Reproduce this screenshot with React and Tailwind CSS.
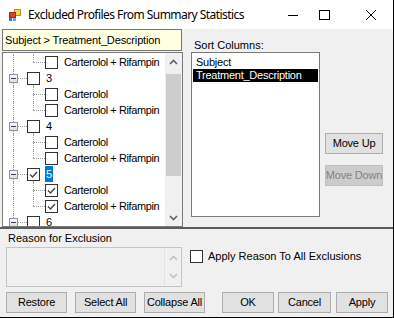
import React from "react";

const ui = { fontFamily: '"Liberation Sans", Arial, sans-serif' };
const segoe = { fontFamily: '"Noto Sans", "Open Sans", sans-serif' };

const Check = ({ checked }) => (
  <div className="relative z-10 flex h-[13px] w-[13px] shrink-0 items-center justify-center border border-[#333333] bg-white">
    {checked && (
      <svg width="11" height="11" viewBox="0 0 11 11">
        <path d="M2 5.5 L4.5 8 L9 3" fill="none" stroke="#444" strokeWidth="1.4" />
      </svg>
    )}
  </div>
);

const Expander = () => (
  <div className="relative z-10 flex h-[9px] w-[9px] shrink-0 items-center justify-center border border-[#919191] bg-gradient-to-b from-white to-[#dcdcdc]">
    <div className="h-[1px] w-[5px] bg-[#2e3f63]" />
  </div>
);

const Chevron = ({ up, color = "#606060" }) => (
  <svg width="9" height="6" viewBox="0 0 9 6">
    <path
      d={up ? "M1 5 L4.5 1.5 L8 5" : "M1 1 L4.5 4.5 L8 1"}
      fill="none"
      stroke={color}
      strokeWidth="1.6"
    />
  </svg>
);

const ParentRow = ({ label, checked, selected }) => (
  <div className="relative flex h-[16px] items-center">
    <div className="absolute left-[10px] top-0 h-full border-l border-dotted border-[#a0a0a0]" />
    <div className="absolute left-[30px] top-[12px] h-[4px] border-l border-dotted border-[#a0a0a0]" />
    <div className="ml-[6px]">
      <Expander />
    </div>
    <div className="w-[9px] border-t border-dotted border-[#a0a0a0]" />
    <Check checked={checked} />
    <span
      className={
        selected
          ? "ml-[5px] bg-[#0078d7] px-[1px] leading-[16px] text-white"
          : "ml-[6px] text-black"
      }
    >
      {label}
    </span>
  </div>
);

const ChildRow = ({ label, checked, last }) => (
  <div className="relative flex h-[16px] items-center">
    <div className="absolute left-[10px] top-0 h-full border-l border-dotted border-[#a0a0a0]" />
    <div
      className={`absolute left-[30px] top-0 border-l border-dotted border-[#a0a0a0] ${last ? "h-[8px]" : "h-full"}`}
    />
    <div className="w-[30px] shrink-0" />
    <div className="w-[12px] border-t border-dotted border-[#a0a0a0]" />
    <Check checked={checked} />
    <span className="ml-[6px] whitespace-nowrap tracking-[-0.4px] text-black">{label}</span>
  </div>
);

const Btn = ({ w, children, disabled }) => (
  <div
    className={`flex h-[21px] shrink-0 items-center justify-center whitespace-nowrap border tracking-[-0.2px] ${
      disabled
        ? "border-[#bfbfbf] bg-[#cccccc] text-[#838383]"
        : "border-[#adadad] bg-[#e1e1e1] text-black"
    } ${w}`}
  >
    {children}
  </div>
);

export default function App() {
  return (
    <div
      className="relative flex h-[318px] w-[394px] flex-col overflow-hidden border-b border-r border-black bg-[#f0f0f0] text-[11px]"
      style={ui}
    >
      {/* title bar */}
      <div className="flex h-[29px] shrink-0 items-center bg-white">
        <svg className="ml-[9px]" width="12" height="12" viewBox="0 0 12 12">
          <rect x="5.5" y="0.5" width="6" height="6" fill="#f7d44a" stroke="#c58a12" />
          <rect x="0.5" y="3.5" width="6" height="5" fill="#d8412f" stroke="#a32a1e" />
          <rect x="0" y="9" width="3" height="3" fill="#3b6fd0" />
          <rect x="4" y="9" width="3" height="3" fill="#6fa0e8" />
        </svg>
        <span className="ml-[7px] flex-1 text-[12px] tracking-[-0.55px] text-black" style={segoe}>
          Excluded Profiles From Summary Statistics
        </span>
        <svg width="10" height="10" viewBox="0 0 10 10">
          <path d="M0 5.5 H10" stroke="#000" strokeWidth="1" />
        </svg>
        <svg className="ml-[21px]" width="11" height="10" viewBox="0 0 11 10">
          <rect x="0.5" y="0.5" width="10" height="9" fill="none" stroke="#000" />
        </svg>
        <svg className="ml-[36px] mr-[17px]" width="10" height="10" viewBox="0 0 10 10">
          <path d="M0 0 L10 10 M10 0 L0 10" stroke="#000" strokeWidth="1" />
        </svg>
      </div>

      {/* top section */}
      <div className="flex h-[198px] shrink-0">
        <div className="w-[183px] shrink-0 pl-[2px] pt-[23px]">
          <div className="flex h-[175px] w-[181px] border border-[#7a7a7a] bg-white">
            <div className="flex-1 overflow-hidden pt-[1px]">
              <ChildRow label="Carterolol + Rifampin" last />
              <ParentRow label="3" />
              <ChildRow label="Carterolol" />
              <ChildRow label="Carterolol + Rifampin" last />
              <ParentRow label="4" />
              <ChildRow label="Carterolol" />
              <ChildRow label="Carterolol + Rifampin" last />
              <ParentRow label="5" checked selected />
              <ChildRow label="Carterolol" checked />
              <ChildRow label="Carterolol + Rifampin" checked last />
              <ParentRow label="6" />
            </div>
            <div className="flex w-[17px] shrink-0 flex-col bg-[#f0f0f0]">
              <div className="flex h-[17px] items-center justify-center">
                <Chevron up />
              </div>
              <div className="flex-1 px-[1px] pt-[4px]">
                <div className="h-[102px] bg-[#cdcdcd]" />
              </div>
              <div className="flex h-[17px] items-center justify-center">
                <Chevron />
              </div>
            </div>
          </div>
        </div>

        <div className="flex flex-1 pl-[8px] pt-[9px]">
          <div className="flex flex-col">
            <div className="h-[14px] pl-[3px] leading-[14px] text-black">Sort Columns:</div>
            <div className="h-[165px] w-[129px] border border-[#7a7a7a] bg-white pl-[1px] pr-[1px] pt-[3px] tracking-[-0.25px]">
              <div className="h-[13px] pl-[3px] leading-[13px] text-black">Subject</div>
              <div className="h-[13px] bg-black pl-[3px] leading-[13px] text-white">
                Treatment_Description
              </div>
            </div>
          </div>
          <div className="ml-[5px] flex flex-col gap-[11px] pt-[95px]">
            <Btn w="w-[58px]">Move Up</Btn>
            <Btn w="w-[58px]" disabled>
              Move Down
            </Btn>
          </div>
        </div>
      </div>

      {/* splitter */}
      <div className="h-[2px] shrink-0 bg-[#5c5c5c]" />

      {/* bottom section */}
      <div className="flex flex-1 flex-col">
        <div className="flex">
          <div className="ml-[6px] flex w-[176px] flex-col">
            <div className="h-[18px] pl-[2px] pt-[2px] leading-[14px] text-black">
              Reason for Exclusion
            </div>
            <div className="flex h-[40px] border border-[#c4c4c4] bg-[#f0f0f0]">
              <div className="flex-1" />
              <div className="flex w-[17px] flex-col justify-between border-l border-[#e3e3e3] py-[7px]">
                <div className="flex justify-center">
                  <Chevron up color="#c2c2c2" />
                </div>
                <div className="flex justify-center">
                  <Chevron color="#c2c2c2" />
                </div>
              </div>
            </div>
          </div>
          <div className="ml-[8px] mt-[21px] flex h-[13px] items-center">
            <Check />
            <span className="ml-[5px] text-black">Apply Reason To All Exclusions</span>
          </div>
        </div>
        <div className="mt-[5px] flex">
          <div className="ml-[6px] flex gap-[8px]">
            <Btn w="w-[61px]">Restore</Btn>
            <Btn w="w-[61px]">Select All</Btn>
            <Btn w="w-[61px]">Collapse All</Btn>
          </div>
          <div className="ml-[17px] flex gap-[4px]">
            <Btn w="w-[52px]">OK</Btn>
            <Btn w="w-[53px]">Cancel</Btn>
            <div className="ml-[1px]">
              <Btn w="w-[52px]">Apply</Btn>
            </div>
          </div>
        </div>
      </div>

      {/* tooltip over the tree */}
      <div className="absolute left-[2px] top-[29px] flex h-[22px] w-[180px] items-center border border-[#767676] bg-[#ffffe1] pl-[2px] text-[11px] tracking-[-0.15px] text-black">
        Subject &gt; Treatment_Description
      </div>
    </div>
  );
}
